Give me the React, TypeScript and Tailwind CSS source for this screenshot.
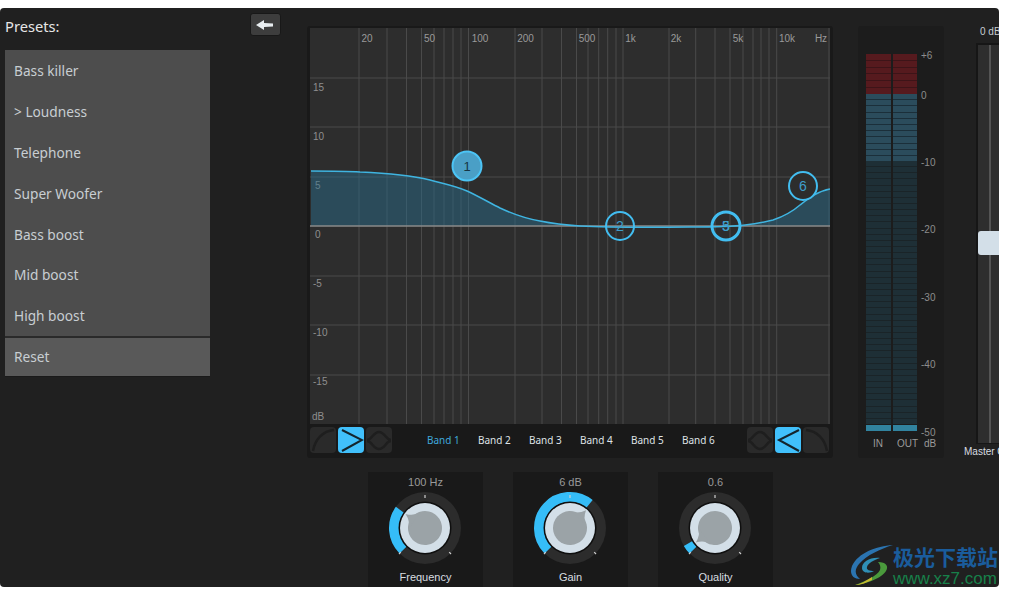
const presets = ['Bass killer', '> Loudness', 'Telephone', 'Super Woofer', 'Bass boost', 'Mid boost', 'High boost'];
const bands = ['Band 1', 'Band 2', 'Band 3', 'Band 4', 'Band 5', 'Band 6'];

const gridX = [359, 387, 406.5, 421.5, 434, 444, 453, 461, 468.5, 515, 542, 561.5, 576.5, 588, 598.7, 607.7, 616, 623, 669, 695.7, 715, 730, 743, 753, 761, 769, 776.7, 829];
const gridY = [78, 127, 177, 276, 325, 375];
const freqLabels: [number, string][] = [[367, '20'], [429.5, '50'], [480, '100'], [525.5, '200'], [587, '500'], [630.5, '1k'], [676, '2k'], [738, '5k'], [787, '10k'], [821, 'Hz']];
const dbLabels: [number, number, string][] = [[313, 87.5, '15'], [313, 136.5, '10'], [315, 185.5, '5'], [315, 235, '0'], [313, 284, '-5'], [313, 333, '-10'], [313, 382, '-15'], [312, 417, 'dB']];
const curve = 'M311 171 C330 171 345 171 360 172 C385 173 410 175 430 180 C445 184 456 186 467 191 C478 196 490 203 500 208 C515 215 528 219 540 221 C555 224 565 225 580 226 C600 227 640 227.5 690 227 C710 227 730 227 745 225 C755 224 765 222 773 220 C782 217 792 212 800 205 C808 199 818 191 830 189';

function EqPlot() {
  return (
    <svg viewBox="310 28 520 396" className="w-[520px] h-[396px] block" style={{ fontFamily: '"Liberation Sans", sans-serif' }}>
      <rect x="310" y="28" width="520" height="396" fill="#2d2d2d" />
      {gridY.map((y) => <line key={y} x1="310" x2="830" y1={y} y2={y} stroke="#4a4a4a" strokeWidth="1" />)}
      {gridX.map((x) => <line key={x} x1={x} x2={x} y1="28" y2="424" stroke="#4a4a4a" strokeWidth="1" />)}
      <path d={`${curve} L830 226 L311 226 Z`} fill="#2a6a88" fillOpacity="0.5" />
      <line x1="310" x2="830" y1="226" y2="226" stroke="#8a8a8a" strokeWidth="1.5" />
      <path d={curve} fill="none" stroke="#3fb4e0" strokeWidth="1.5" />
      {freqLabels.map(([x, t]) => <text key={t} x={x} y="42" textAnchor="middle" fontSize="10" fill="#9a9a9a">{t}</text>)}
      {dbLabels.map(([x, y, t]) => <text key={t} x={x} y={y + 3} fontSize="10" fill={t === '5' ? '#62808c' : '#8f8f8f'}>{t}</text>)}
      <circle cx="467" cy="166" r="14.5" fill="#4a9fc6" stroke="#4cc4f5" strokeWidth="2" />
      <text x="467" y="171" textAnchor="middle" fontSize="13" fill="#173544">1</text>
      <circle cx="620" cy="226" r="14" fill="none" stroke="#42bdf0" strokeWidth="2" />
      <text x="620" y="231" textAnchor="middle" fontSize="14" fill="#3f9fcb">2</text>
      <circle cx="726" cy="226" r="14" fill="none" stroke="#42bdf0" strokeWidth="3" />
      <text x="726" y="231" textAnchor="middle" fontSize="14" fill="#3f9fcb">3</text>
      <text x="726" y="231" textAnchor="middle" fontSize="14" fill="#3f9fcb">5</text>
      <circle cx="803" cy="186" r="14" fill="#2d2d2d" stroke="#42bdf0" strokeWidth="2" />
      <text x="803" y="191" textAnchor="middle" fontSize="14" fill="#3f9fcb">6</text>
    </svg>
  );
}

function FilterBtn({ kind, on }: { kind: 'lowshelf' | 'high' | 'notch' | 'low' | 'highshelf'; on?: boolean }) {
  const paths = {
    lowshelf: 'M3 24 C5 12 13 4 24 3',
    high: 'M4 3 L24 13 L4 24',
    notch: 'M1 13 C6 13 7 5 13 5 C19 5 20 13 25 13 M1 14 C6 14 7 22 13 22 C19 22 20 14 25 14',
    low: 'M24 3 L4 13 L24 24',
    highshelf: 'M3 3 C14 4 22 12 24 24',
  };
  return (
    <div className={`w-[26px] h-[26px] rounded-sm ${on ? 'bg-[#41c0fb]' : 'bg-[#2a2a2a]'}`}>
      <svg viewBox="0 0 26 26" className="w-full h-full" fill="none" stroke={on ? '#14242c' : '#1e1e1e'} strokeWidth={on ? 2 : 2.5}>
        <path d={paths[kind]} />
      </svg>
    </div>
  );
}

function Knob({ value, label, to, tip }: { value: string; label: string; to: number; tip: number }) {
  const pt = (r: number, a: number) => {
    const rad = (a * Math.PI) / 180;
    return [40 + r * Math.sin(rad), 40 - r * Math.cos(rad)].map((n) => n.toFixed(2)).join(' ');
  };
  const large = to + 135 > 180 ? 1 : 0;
  return (
    <div className="w-[115px] h-[115px] bg-[#191919] flex flex-col items-center">
      <div className="text-[11px] leading-[14px] mt-[3px] text-[#9a9a9a]">{value}</div>
      <svg viewBox="0 0 80 80" className="w-[80px] h-[80px] -mt-px -ml-[2px]">
        <circle cx="40" cy="40" r="36" fill="#2c2c2c" />
        <path d={`M${pt(31, -135)} A31 31 0 ${large} 1 ${pt(31, to)}`} fill="none" stroke="#35bdf8" strokeWidth="10" />
        <circle cx="40" cy="40" r="26.5" fill="#0f0f0f" />
        <circle cx="40" cy="40" r="25" fill="#d3dfe8" />
        <g transform={`rotate(${tip} 40 40)`}>
          <circle cx="40" cy="40" r="17" fill="#9ba3a7" />
          <path d="M30 27 Q37 24 40 16 Q43 24 50 27 Z" fill="#9ba3a7" />
        </g>
        <line x1="40" y1="7" x2="40" y2="10" stroke="#cfcfcf" strokeWidth="1.2" />
        <line x1="15.8" y1="64.2" x2="14" y2="66" stroke="#cfcfcf" strokeWidth="1.2" />
        <line x1="64.2" y1="64.2" x2="66" y2="66" stroke="#cfcfcf" strokeWidth="1.2" />
      </svg>
      <div className="text-[11px] leading-[14px] mt-[2px] text-[#d8dde0]">{label}</div>
    </div>
  );
}

function Segments({ count, box, row }: { count: number; box: string; row: string }) {
  return (
    <div className={`flex flex-col gap-px ${box}`}>
      {Array.from({ length: count }, (_, i) => <div key={i} className={`flex-1 ${row}`} />)}
    </div>
  );
}

function MeterBar() {
  return (
    <div className="w-[24.5px] flex flex-col">
      <Segments count={6} box="h-[40px] bg-[#3d1418]" row="bg-[#561a1e]" />
      <Segments count={11} box="h-[67px] bg-[#1b2f3a]" row="bg-[#2b4c5c]" />
      <Segments count={43} box="h-[263px] bg-[#1a2428]" row="bg-[#1e2f36]" />
      <div className="mt-px h-[6px] bg-[#31839f]" />
    </div>
  );
}

const scale: [string, string][] = [['+6', 'h-[40px]'], ['0', 'h-[67px]'], ['-10', 'h-[67px]'], ['-20', 'h-[68px]'], ['-30', 'h-[67px]'], ['-40', 'h-[68px]'], ['-50', 'h-[14px]']];

export default function App() {
  return (
    <div className="relative w-[1009px] h-[595px] bg-white pt-2 overflow-hidden" style={{ fontFamily: '"Liberation Sans", sans-serif' }}>
      <div className="w-[999px] h-[579px] bg-[#202020] rounded-[4px] overflow-hidden flex">
        <div className="ml-[5px] w-[205px] shrink-0" style={{ fontFamily: '"Noto Sans", sans-serif' }}>
          <div className="h-[42px] pt-[8px] text-[14.7px] leading-[20px] text-[#e6e6e6]">Presets:</div>
          <div className="bg-[#4d4d4d]">
            {presets.map((p) => (
              <div key={p} className="h-[40.86px] pl-[9px] pt-[2px] flex items-center text-[13.7px] text-[#c8ced2]">{p}</div>
            ))}
          </div>
          <div className="h-[2px] bg-[#2a2a2a]" />
          <div className="h-[39px] pl-[9px] flex items-center text-[13.7px] text-[#c8ced2] bg-[#595959] border-b border-[#1a1a1a]">Reset</div>
        </div>

        <div className="ml-[40px] mt-[5px] w-[31px] h-[23px] shrink-0 rounded-[3px] bg-[#3d3d3d] border border-[#181818] flex items-center justify-center pr-[3px]">
          <svg viewBox="0 0 17 10" className="w-[17px] h-[10px]"><path d="M0 5 L8 0 L8 3 L17 3.5 L17 6.5 L8 7 L8 10 Z" fill="#e8edf0" /></svg>
        </div>

        <div className="ml-[26px] w-[526px] shrink-0 flex flex-col">
          <div className="mt-[18px] h-[432px] bg-[#191919] rounded-[3px] pt-[2px] px-[3px]">
            <EqPlot />
            <div className="mt-[3px] flex items-center h-[26px] gap-[2px]" style={{ fontFamily: '"Noto Sans", sans-serif' }}>
              <FilterBtn kind="lowshelf" />
              <FilterBtn kind="high" on />
              <FilterBtn kind="notch" />
              <div className="ml-[33px] flex w-[306px]">
                {bands.map((b, i) => (
                  <div key={b} className={`w-[51px] text-[10px] ${i === 0 ? 'text-[#3fa9dc]' : 'text-[#dfe3e6]'}`}>{b}</div>
                ))}
              </div>
              <div className="ml-[12px] flex gap-[2px]">
                <FilterBtn kind="notch" />
                <FilterBtn kind="low" on />
                <FilterBtn kind="highshelf" />
              </div>
            </div>
          </div>
          <div className="mt-[14px] ml-[61px] flex gap-[30px]">
            <Knob value="100 Hz" label="Frequency" to={-54} tip={-54} />
            <Knob value="6 dB" label="Gain" to={39} tip={42} />
            <Knob value="0.6" label="Quality" to={-120} tip={-127} />
          </div>
        </div>

        <div className="ml-[25px] mt-[18px] w-[86px] h-[432px] shrink-0 bg-[#1c1c1c] rounded-[3px] flex flex-col">
          <div className="flex">
            <div className="ml-[8px] mt-[28px] flex gap-[2px]">
              <MeterBar />
              <MeterBar />
            </div>
            <div className="ml-[4px] mt-[23px] flex flex-col text-[10px] leading-[14px] text-[#8c8c8c]">
              {scale.map(([t, h]) => <div key={t} className={h}>{t}</div>)}
            </div>
          </div>
          <div className="flex text-[10px] leading-[14px] text-[#9a9a9a] -mt-[3px]">
            <div className="ml-[15px] w-[24px]">IN</div>
            <div className="w-[27px]">OUT</div>
            <div>dB</div>
          </div>
        </div>

        <div className="ml-[32px] w-[23px] shrink-0">
          <div className="pt-[18px] pl-[4px] text-[10px] leading-[12px] text-[#c8ced2] whitespace-nowrap">0 dB</div>
          <div className="mt-[5px] h-[401px] bg-[#161616] pt-[2px] pb-px pl-[2px]">
            <div className="h-full bg-[#2e2e2e] relative">
              <div className="ml-[11px] w-[2px] h-full bg-[#555555]" />
              <div className="absolute top-[186px] left-0 w-[40px] h-[24px] rounded-[3px] bg-[#d3dfe8]" />
            </div>
          </div>
          <div className="-ml-[12px] mt-[2px] text-[10px] leading-[12px] text-[#d8dde0] whitespace-nowrap">Master Gain</div>
        </div>
      </div>

      <div className="absolute left-[850px] top-[544px] flex items-start">
        <svg viewBox="0 0 44 42" className="w-[44px] h-[42px]">
          <path d="M43 1 C26 2 8 9 2 22 C-1 30 3 35 10 35 C5 31 4 26 9 20 C17 11 30 5 43 1 Z" fill="#2b74b0" />
          <path d="M30 14 C20 13 12 18 12 24 C12 29 19 30 24 27 C20 27 16 26 17 23 C18 19 24 16 30 14 Z" fill="#2f8fb5" />
          <path d="M28 18 C36 18 39 22 36 27 C32 34 16 40 5 41 C16 37 27 32 30 26 C31 23 30 20 28 18 Z" fill="#4a9a3c" />
          <path d="M22 33 C16 37 10 40 5 41 C10 41 16 39 22 36 Z" fill="#c9b92e" />
        </svg>
        <div className="-ml-px flex flex-col">
          <div className="text-[21px] leading-[24px] font-bold text-[#1a5c9c] whitespace-nowrap" style={{ fontFamily: '"Noto Sans CJK SC", sans-serif' }}>极光下载站</div>
          <div className="text-[17px] leading-[18px] mt-[2px] text-[#17804a] whitespace-nowrap">www.xz7.com</div>
        </div>
      </div>
    </div>
  );
}
